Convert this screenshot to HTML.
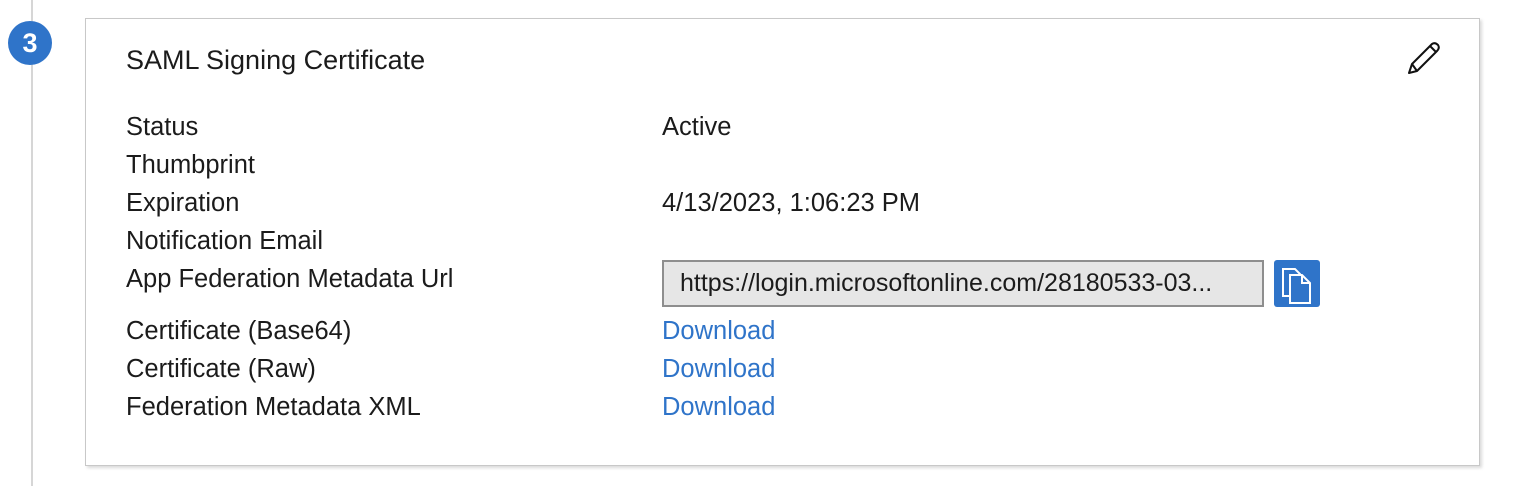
<!DOCTYPE html>
<html><head><style>
body{margin:0;width:1540px;height:486px;background:#fff;font-family:"Liberation Sans",sans-serif;position:relative;overflow:hidden;color:#1b1b1b}
.vl{position:absolute;left:31px;top:0;width:2px;height:486px;background:#d6d6d6}
.circ{position:absolute;left:8px;top:21px;width:44px;height:44px;border-radius:50%;background:#2f74c9;color:#fff;font-weight:bold;font-size:27px;text-align:center;line-height:44px}
.card{position:absolute;left:85px;top:18px;width:1393px;height:446px;border:1px solid #c8c8c8;box-shadow:2px 2px 3px rgba(0,0,0,.15);background:#fff}
.t{position:absolute;font-size:25.5px;white-space:nowrap;line-height:30px}
.title{font-size:27px}
.link{color:#2f74c9}
.inp{position:absolute;left:662px;top:260px;height:43px;border:2px solid #8e8e8e;background:#e6e6e6;font-size:25px;line-height:43px;padding-left:16px;width:582px;overflow:hidden;white-space:nowrap}
.btn{position:absolute;left:1274px;top:260px;width:46px;height:47px;background:#2f74c9;border-radius:3px}
</style></head><body>
<div class="vl"></div>
<div class="circ">3</div>
<div class="card"></div>
<div class="t title" style="left:126px;top:45px">SAML Signing Certificate</div>
<svg style="position:absolute;left:1405px;top:40px" width="36" height="36" viewBox="0 0 36 36"><path d="M4 33 L7 24 L27 4 Q30 2 33 5 Q35 8 32 11 L12 31 Z M7 24 L12 31 M25 6 L31 12" fill="none" stroke="#111" stroke-width="2" stroke-linejoin="round"/></svg>
<div class="t" style="left:126px;top:112px">Status</div>
<div class="t" style="left:662px;top:112px">Active</div>
<div class="t" style="left:126px;top:150px">Thumbprint</div>
<div class="t" style="left:126px;top:188px">Expiration</div>
<div class="t" style="left:662px;top:188px">4/13/2023, 1:06:23 PM</div>
<div class="t" style="left:126px;top:226px">Notification Email</div>
<div class="t" style="left:126px;top:264px">App Federation Metadata Url</div>
<div class="inp">https://login.microsoftonline.com/28180533-03...</div>
<div class="btn"><svg width="46" height="47" viewBox="0 0 46 47"><path d="M9 9 H21 L26 14 V36 H9 Z" fill="none" stroke="#fff" stroke-width="2"/><path d="M16 15 H28 L36 23 V43 H16 Z" fill="#2f74c9" stroke="#fff" stroke-width="2"/><path d="M28 15 V23 H36" fill="none" stroke="#fff" stroke-width="2"/></svg></div>
<div class="t" style="left:126px;top:316px">Certificate (Base64)</div>
<div class="t link" style="left:662px;top:316px">Download</div>
<div class="t" style="left:126px;top:354px">Certificate (Raw)</div>
<div class="t link" style="left:662px;top:354px">Download</div>
<div class="t" style="left:126px;top:392px">Federation Metadata XML</div>
<div class="t link" style="left:662px;top:392px">Download</div>
</body></html>
